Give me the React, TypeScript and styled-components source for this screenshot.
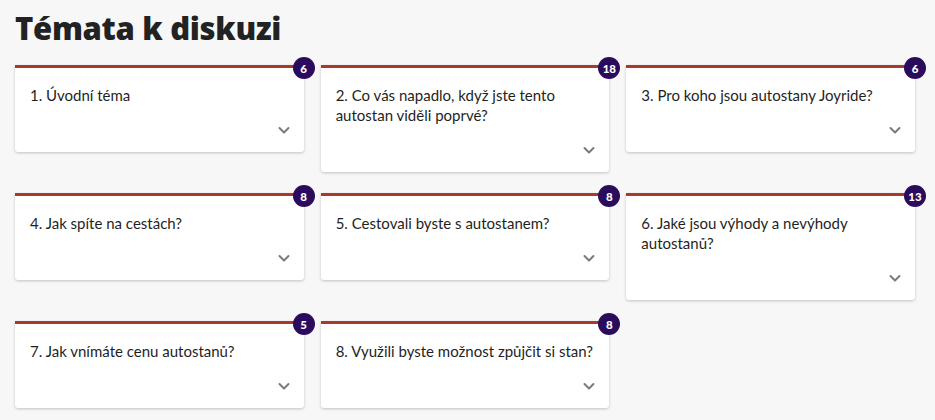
import React from "react";
import styled, { createGlobalStyle } from "styled-components";

const GlobalStyle = createGlobalStyle`
  body {
    margin: 0;
    background: #f7f7f7;
    font-family: "Lato", "Noto Sans", sans-serif;
    color: #222;
  }
`;

const Page = styled.div`
  padding: 8px 15px 20px;
  width: 900px;
`;

const Title = styled.h1`
  font-family: "Open Sans", "Lato", sans-serif;
  font-size: 31px;
  line-height: 40px;
  font-weight: 800;
  color: #222;
  margin: 0 0 17px;
  letter-spacing: -0.3px;
`;

const Grid = styled.div`
  display: grid;
  grid-template-columns: repeat(3, 1fr);
  column-gap: 17px;
  row-gap: 21px;
  align-items: start;
`;

const Card = styled.div`
  position: relative;
  background: #fff;
  border-top: 3px solid #a8392b;
  border-radius: 0 0 3px 3px;
  box-shadow: 0 1px 3px rgba(0, 0, 0, 0.22);
`;

const Badge = styled.span`
  position: absolute;
  top: -11px;
  right: -11px;
  width: 22px;
  height: 22px;
  border-radius: 50%;
  background: #2b0b5c;
  color: #fff;
  font-size: 11.5px;
  font-weight: 900;
  display: flex;
  align-items: center;
  justify-content: center;
`;

const Question = styled.div`
  padding: 17px 15px 0 15px;
  font-size: 15px;
  line-height: 20px;
  color: #1f1f1f;
`;

const Footer = styled.div`
  display: flex;
  justify-content: flex-end;
  height: 16px;
  margin-top: 17px;
  padding: 0 12px 14px 0;
`;

const Chevron = () => (
  <svg width="16" height="16" viewBox="0 0 16 16" fill="none">
    <path d="M3.5 6 L8 10.5 L12.5 6" stroke="#7a7a7a" strokeWidth="2" strokeLinecap="round" strokeLinejoin="round" />
  </svg>
);

const topics = [
  { text: "1. Úvodní téma", count: 6 },
  { text: "2. Co vás napadlo, když jste tento autostan viděli poprvé?", count: 18 },
  { text: "3. Pro koho jsou autostany Joyride?", count: 6 },
  { text: "4. Jak spíte na cestách?", count: 8 },
  { text: "5. Cestovali byste s autostanem?", count: 8 },
  { text: "6. Jaké jsou výhody a nevýhody autostanů?", count: 13 },
  { text: "7. Jak vnímáte cenu autostanů?", count: 5 },
  { text: "8. Využili byste možnost způjčit si stan?", count: 8 },
];

export default function App() {
  return (
    <>
      <GlobalStyle />
      <Page>
        <Title>Témata k diskuzi</Title>
        <Grid>
          {topics.map((t) => (
            <Card key={t.text}>
              <Badge>{t.count}</Badge>
              <Question>{t.text}</Question>
              <Footer>
                <Chevron />
              </Footer>
            </Card>
          ))}
        </Grid>
      </Page>
    </>
  );
}
